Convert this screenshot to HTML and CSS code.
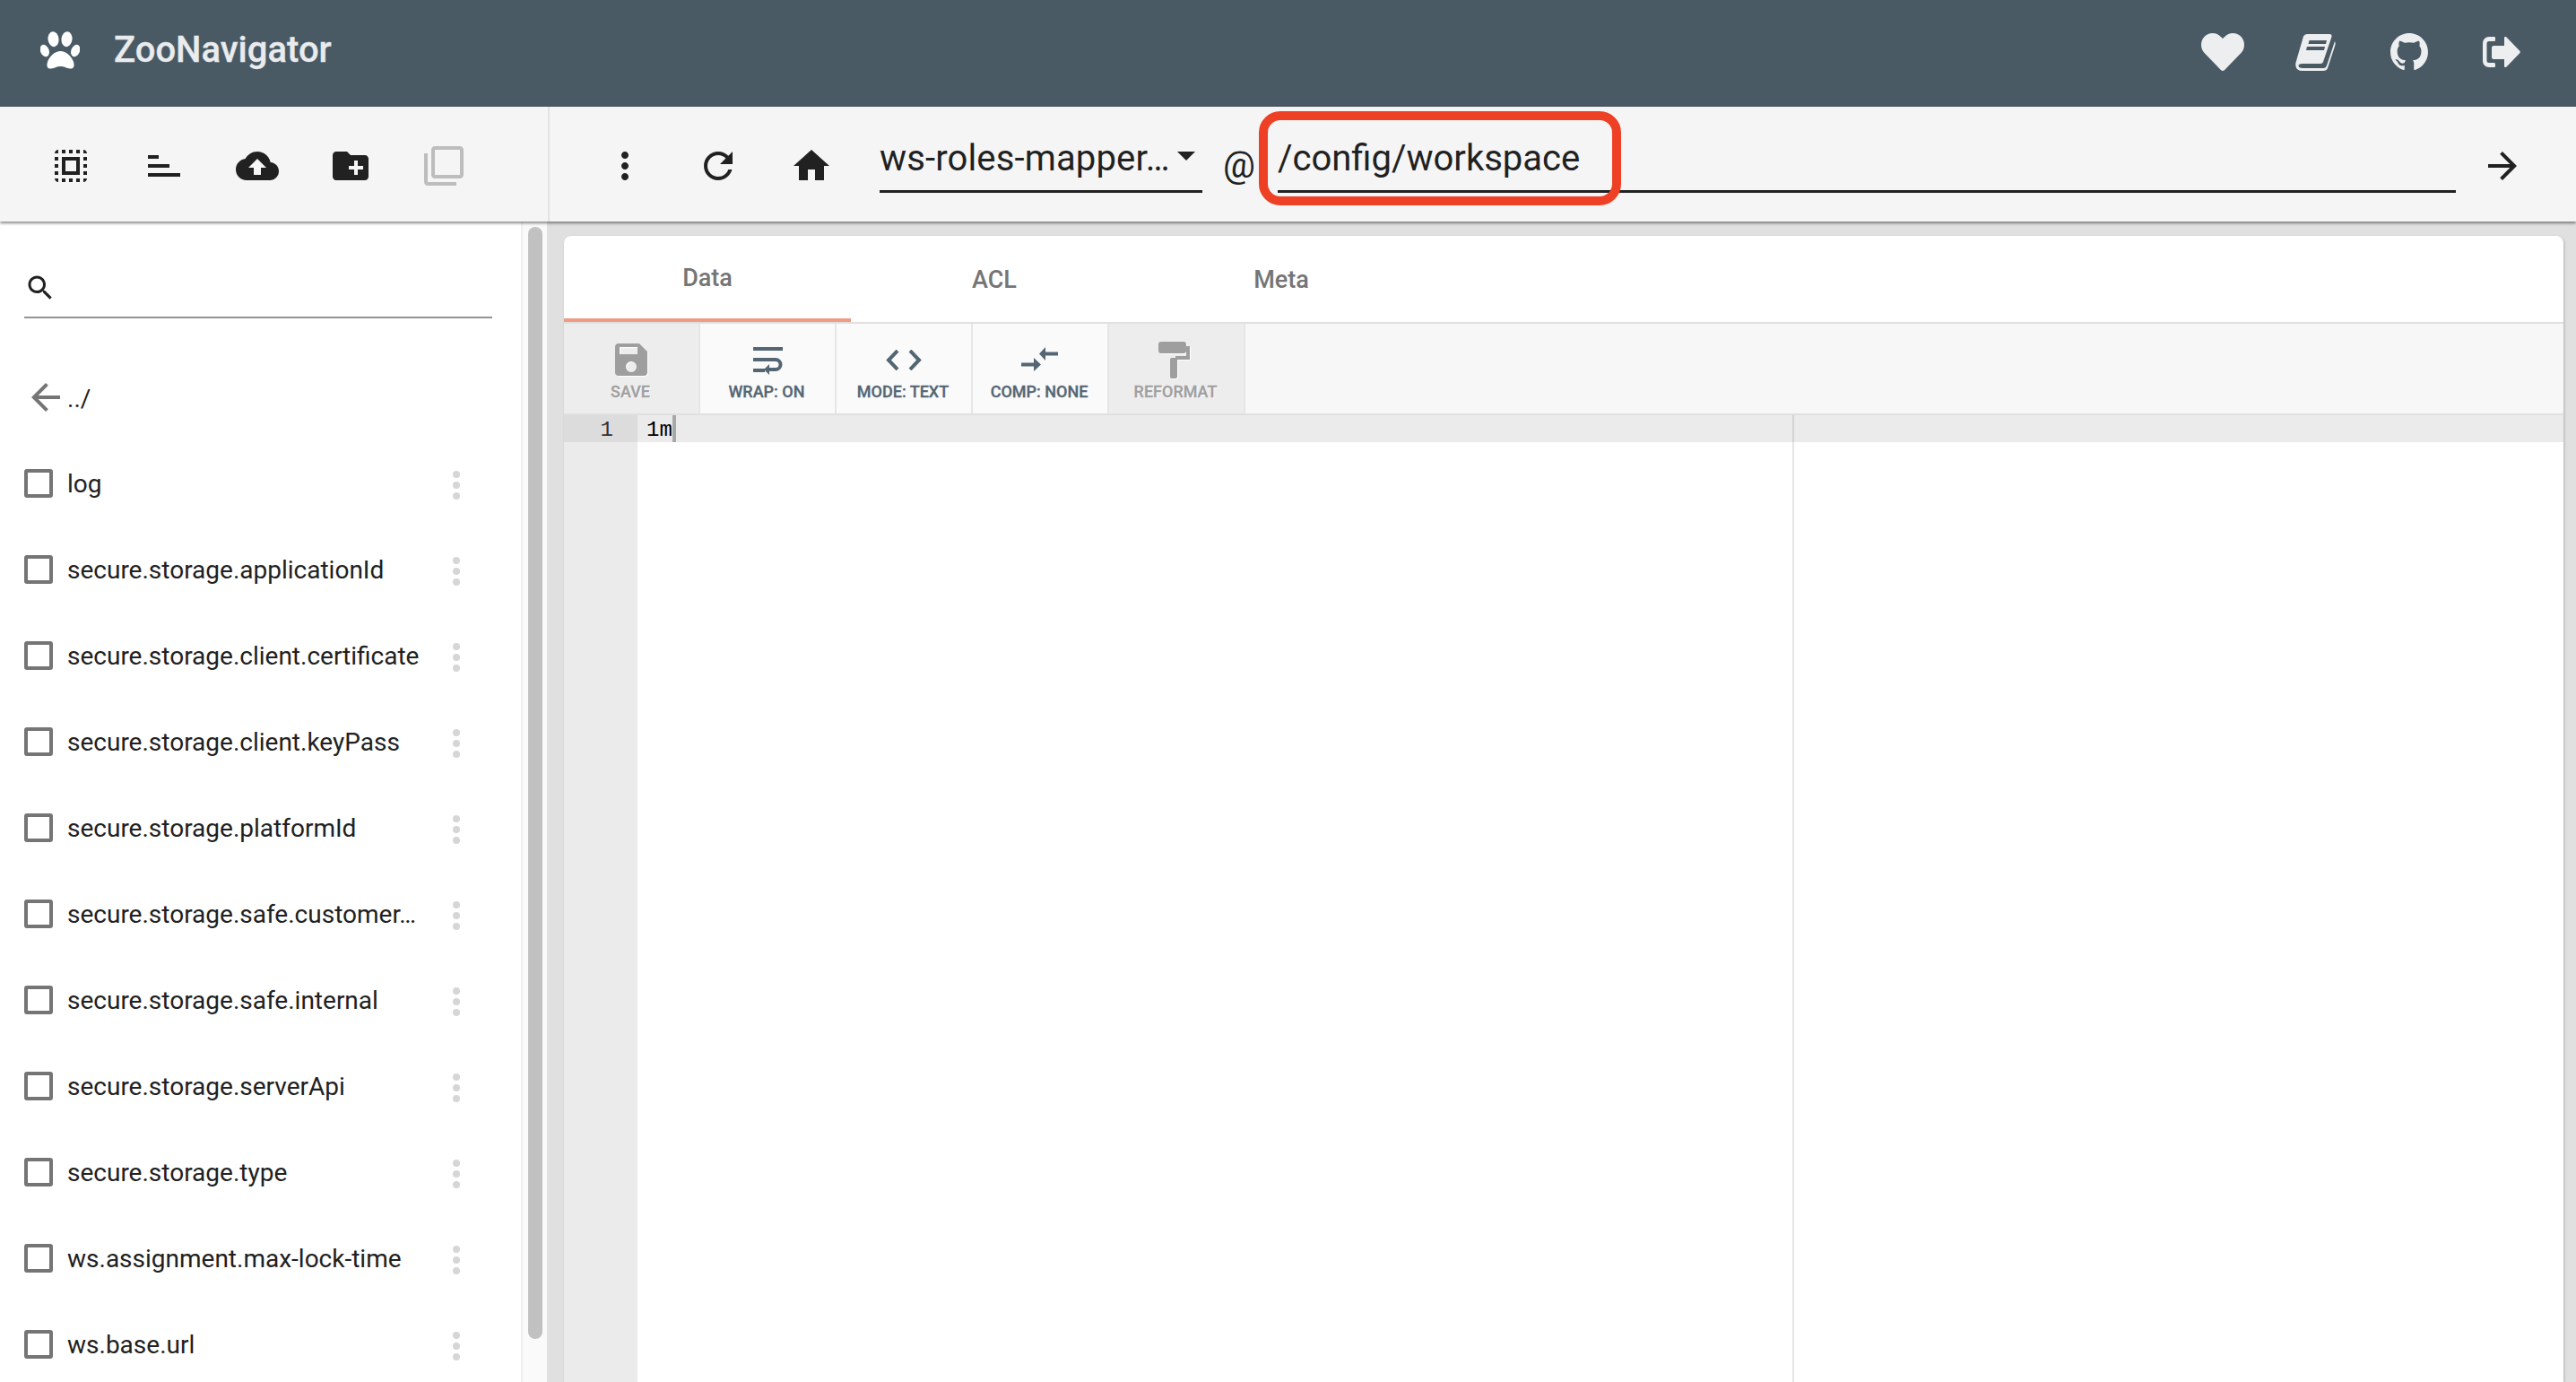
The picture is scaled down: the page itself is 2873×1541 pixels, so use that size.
FILE: index.html
```html
<!DOCTYPE html>
<html lang="en">
<head>
<meta charset="utf-8">
<title>ZooNavigator</title>
<link rel="stylesheet" href="styles.css">
</head>
<body>
<header class="appbar">
  <svg class="paw" viewBox="0 0 44 42"><path d="M22.500 22c6 0 12 5 14.500 12 1.500 5 0 8-4 7.500-4-.5-6.500-2.500-10.500-2.500s-6.500 2-10.500 2.500c-4 .5-5.500-2.500-4-7.500C10.500 27 16.500 22 22.500 22z"/><ellipse cx="14.500" cy="8.700" rx="6" ry="8.500" transform="rotate(-6 14.500 8.700)"/><ellipse cx="29.500" cy="8.700" rx="6" ry="8.500" transform="rotate(6 29.500 8.700)"/><ellipse cx="4.800" cy="21.500" rx="4.800" ry="7" transform="rotate(-22 4.800 21.500)"/><ellipse cx="39.200" cy="21.500" rx="4.800" ry="7" transform="rotate(22 39.200 21.500)"/></svg>
  <span class="brand">ZooNavigator</span>
  <nav class="appbar-actions">
    <svg class="ic-heart" viewBox="0 32 512 448"><path d="M462.3 62.6C407.5 15.9 326 24.3 275.7 76.2L256 96.5l-19.7-20.3C186.1 24.3 104.5 15.9 49.7 62.6c-62.8 53.6-66.1 149.8-9.9 207.9l193.5 199.8c12.5 12.9 32.8 12.9 45.3 0l193.5-199.8c56.3-58.1 53-154.3-9.8-207.9z"/></svg>
    <svg class="ic-book" viewBox="0 0 45 41"><path fill-rule="evenodd" d="M9 2.500Q10 0 13 0H38Q41 0 40.500 3L31 31Q30.500 33 28 33H8Q3 33 3.500 35.500Q4 38 8 38H32Q34 38 35 35L44 8Q45 10 44.500 12L36 38Q35 41 31 41H8Q1 41 .3 35Q0 33 1 30ZM15.500 7H35L34 11H14.500ZM13 14H33L32 18H12Z"/></svg>
    <svg class="ic-gh" viewBox="0 0 16 16"><path d="M8 0C3.580 0 0 3.580 0 8c0 3.540 2.290 6.530 5.470 7.590.4.070.55-.17.55-.38 0-.19-.01-.82-.01-1.490-2.010.37-2.530-.49-2.690-.94-.09-.23-.48-.94-.82-1.130-.28-.15-.68-.52-.01-.53.63-.01 1.080.58 1.230.82.72 1.210 1.870.87 2.330.66.07-.52.28-.87.51-1.070-1.780-.2-3.640-.89-3.640-3.950 0-.87.31-1.590.82-2.150-.08-.2-.36-1.020.08-2.120 0 0 .67-.21 2.200.82.64-.18 1.320-.27 2-.27.68 0 1.360.09 2 .27 1.530-1.040 2.200-.82 2.200-.82.44 1.100.16 1.920.08 2.120.51.56.82 1.270.82 2.150 0 3.070-1.870 3.750-3.650 3.950.29.25.54.73.54 1.480 0 1.070-.01 1.930-.01 2.200 0 .21.15.46.55.38A8.013 8.013 0 0016 8c0-4.420-3.580-8-8-8z"/></svg>
    <svg class="ic-out" viewBox="0 0 42 34"><path d="M13 0H7a7 7 0 0 0-7 7v20a7 7 0 0 0 7 7h6c1 0 1-1 1-2v-1c0-1-.5-2-1-2H7a2.500 2.500 0 0 1-2.500-2.500V7.500A2.500 2.500 0 0 1 7 5h6c1 0 1-1 1-2V2c0-1 0-2-1-2z"/><path d="M24 1c0-1 1.500-1.500 2.500-.5L41 15.500c1 1 1 2 0 3L26.500 33.500c-1 1-2.500.5-2.500-.5V25H12c-1 0-2-1-2-2V12c0-1 1-2 2-2h12z"/></svg>
  </nav>
</header>

<section class="toolbar">
  <div class="tools-left">
    <button class="ic-btn"><svg viewBox="0 0 24 24"><path d="M3 5h2V3c-1.100 0-2 .9-2 2zm0 8h2v-2H3v2zm4 8h2v-2H7v2zM3 9h2V7H3v2zm10-6h-2v2h2V3zm6 0v2h2c0-1.100-.9-2-2-2zM5 21v-2H3c0 1.100.9 2 2 2zm-2-4h2v-2H3v2zM9 3H7v2h2V3zm2 18h2v-2h-2v2zm8-8h2v-2h-2v2zm0 8c1.100 0 2-.9 2-2h-2v2zm0-12h2V7h-2v2zm0 8h2v-2h-2v2zm-4 4h2v-2h-2v2zm0-16h2V3h-2v2zM7 17h10V7H7v10zm2-8h6v6H9V9z"/></svg></button>
    <button class="ic-btn"><svg viewBox="0 0 24 24"><path d="M3 6h6v2H3zM3 11h12v2H3zM3 16h18v2H3z"/></svg></button>
    <button class="ic-btn"><svg viewBox="0 0 24 24"><path d="M19.350 10.040C18.670 6.590 15.640 4 12 4 9.110 4 6.600 5.640 5.350 8.040 2.340 8.360 0 10.910 0 14c0 3.310 2.690 6 6 6h13c2.760 0 5-2.240 5-5 0-2.640-2.050-4.780-4.650-4.960zM14 13v4h-4v-4H7l5-5 5 5h-3z"/></svg></button>
    <button class="ic-btn"><svg viewBox="0 0 24 24"><path d="M20 6h-8l-2-2H4c-1.110 0-1.990.89-1.990 2L2 18c0 1.110.89 2 2 2h16c1.110 0 2-.89 2-2V8c0-1.110-.89-2-2-2zm-1 8h-3v3h-2v-3h-3v-2h3V9h2v3h3v2z"/></svg></button>
    <button class="ic-btn is-disabled"><svg viewBox="0 0 24 24"><path d="M3 5H1v16c0 1.100.9 2 2 2h16v-2H3V5zm18-4H7c-1.100 0-2 .9-2 2v14c0 1.100.9 2 2 2h14c1.100 0 2-.9 2-2V3c0-1.100-.9-2-2-2zm0 16H7V3h14v14z"/></svg></button>
  </div>
  <div class="tools-right">
    <button class="ic-btn"><svg viewBox="0 0 24 24"><path d="M12 8c1.100 0 2-.9 2-2s-.9-2-2-2-2 .9-2 2 .9 2 2 2zm0 2c-1.100 0-2 .9-2 2s.9 2 2 2 2-.9 2-2-.9-2-2-2zm0 6c-1.100 0-2 .9-2 2s.9 2 2 2 2-.9 2-2-.9-2-2-2z"/></svg></button>
    <button class="ic-btn"><svg viewBox="0 0 24 24"><path d="M17.650 6.350C16.200 4.900 14.210 4 12 4c-4.420 0-7.990 3.580-7.990 8s3.570 8 7.990 8c3.730 0 6.840-2.550 7.730-6h-2.080c-.82 2.330-3.040 4-5.650 4-3.310 0-6-2.690-6-6s2.690-6 6-6c1.660 0 3.140.69 4.220 1.780L13 11h7V4l-2.350 2.350z"/></svg></button>
    <button class="ic-btn"><svg viewBox="0 0 24 24"><path d="M10 20v-6h4v6h5v-8h3L12 3 2 12h3v8z"/></svg></button>
    <div class="server-select">
      <span class="server-name">ws-roles-mapper…</span>
      <span class="caret"></span>
    </div>
    <span class="at">@</span>
    <div class="path-field">/config/workspace<span class="callout"></span></div>
    <button class="ic-btn go-btn"><svg viewBox="0 0 24 24"><path d="M12 4l-1.410 1.410L16.170 11H4v2h12.170l-5.580 5.590L12 20l8-8z"/></svg></button>
  </div>
</section>

<main class="workspace">
  <aside class="sidebar">
    <div class="side-main">
      <div class="search">
        <svg viewBox="0 0 24 24"><path d="M15.500 14h-.79l-.28-.27C15.410 12.590 16 11.110 16 9.500 16 5.910 13.090 3 9.500 3S3 5.910 3 9.500 5.910 16 9.500 16c1.610 0 3.090-.59 4.230-1.570l.27.28v.79l5 4.990L20.490 19l-4.990-5zm-6 0C7.010 14 5 11.990 5 9.500S7.010 5 9.500 5 14 7.010 14 9.500 11.990 14 9.500 14z"/></svg>
      </div>
      <div class="back">
        <svg viewBox="0 0 24 24"><path d="M20 11H7.830l5.590-5.590L12 4l-8 8 8 8 1.410-1.410L7.830 13H20v-2z"/></svg>
        <span>../</span>
      </div>
      <ul class="znodes">
        <li class="znode"><span class="check"></span><span class="znode-name">log</span><span class="dots"><i></i><i></i><i></i></span></li>
        <li class="znode"><span class="check"></span><span class="znode-name">secure.storage.applicationId</span><span class="dots"><i></i><i></i><i></i></span></li>
        <li class="znode"><span class="check"></span><span class="znode-name">secure.storage.client.certificate</span><span class="dots"><i></i><i></i><i></i></span></li>
        <li class="znode"><span class="check"></span><span class="znode-name">secure.storage.client.keyPass</span><span class="dots"><i></i><i></i><i></i></span></li>
        <li class="znode"><span class="check"></span><span class="znode-name">secure.storage.platformId</span><span class="dots"><i></i><i></i><i></i></span></li>
        <li class="znode"><span class="check"></span><span class="znode-name">secure.storage.safe.customer…</span><span class="dots"><i></i><i></i><i></i></span></li>
        <li class="znode"><span class="check"></span><span class="znode-name">secure.storage.safe.internal</span><span class="dots"><i></i><i></i><i></i></span></li>
        <li class="znode"><span class="check"></span><span class="znode-name">secure.storage.serverApi</span><span class="dots"><i></i><i></i><i></i></span></li>
        <li class="znode"><span class="check"></span><span class="znode-name">secure.storage.type</span><span class="dots"><i></i><i></i><i></i></span></li>
        <li class="znode"><span class="check"></span><span class="znode-name">ws.assignment.max-lock-time</span><span class="dots"><i></i><i></i><i></i></span></li>
        <li class="znode"><span class="check"></span><span class="znode-name">ws.base.url</span><span class="dots"><i></i><i></i><i></i></span></li>
      </ul>
    </div>
    <div class="scrolltrack"><div class="scrollthumb"></div></div>
  </aside>

  <section class="card">
    <div class="tabs">
      <div class="tab is-active">Data</div>
      <div class="tab">ACL</div>
      <div class="tab">Meta</div>
    </div>
    <div class="editor-tools">
      <button class="ed-btn is-off">
        <svg class="ed-save" viewBox="0 0 36 36"><path fill-rule="evenodd" d="M4 0h23l9 9v23a4 4 0 0 1-4 4H4a4 4 0 0 1-4-4V4a4 4 0 0 1 4-4zM5 4v8h20V4zM18 20a6 6 0 1 0 0 12 6 6 0 0 0 0-12z"/></svg>
        <span>SAVE</span>
      </button>
      <button class="ed-btn">
        <svg class="ed-wrap" viewBox="0 0 34 32"><path d="M0 0h33v4H0zM0 12h25a7.500 7.500 0 0 1 0 15h-7v4l-6-6 6-6v4h7a3.500 3.500 0 0 0 0-7H0zM0 24h13v4H0z"/></svg>
        <span>WRAP: ON</span>
      </button>
      <button class="ed-btn">
        <svg class="ed-code" viewBox="0 0 40 23"><path d="M13 1L3 11.500 13 22M27 1l10 10.500L27 22"/></svg>
        <span>MODE: TEXT</span>
      </button>
      <button class="ed-btn">
        <svg class="ed-comp" viewBox="0 0 41 27"><path d="M20 7.500L27 0v5.500h14v4H27V15zM22 19.500L14 27v-5.500H0v-4h14V12z"/></svg>
        <span>COMP: NONE</span>
      </button>
      <button class="ed-btn is-off">
        <svg class="ed-roll" viewBox="0 0 35 41"><rect width="31" height="13" rx="3"/><path d="M31 5h4v15H19v-4h12z"/><rect x="13" y="18" width="8" height="23" rx="2"/></svg>
        <span>REFORMAT</span>
      </button>
    </div>
    <div class="editor">
      <div class="gutter"><div class="gutter-cell">1</div></div>
      <div class="code">
        <div class="code-line">1m<span class="cursor"></span></div>
        <div class="print-margin"></div>
      </div>
    </div>
  </section>
</main>
</body>
</html>
```

FILE: styles.css
```css
* { box-sizing: border-box; }
html, body { margin: 0; height: 100%; overflow: hidden; }
body {
  width: 2873px;
  height: 1541px;
  display: flex;
  flex-direction: column;
  background: #e0e0e0;
  font-family: Roboto, "Liberation Sans", sans-serif;
  color: #212121;
}
ul { list-style: none; margin: 0; padding: 0; }
button { border: 0; background: none; padding: 0; margin: 0; font: inherit; }

.appbar {
  flex: none;
  height: 119px;
  background: #4a5a65;
  display: flex;
  align-items: center;
  padding-left: 45px;
  color: #eceef0;
}
.paw { width: 44px; height: 42px; fill: #fff; margin-bottom: 8px; }
.brand { margin-left: 38px; margin-bottom: 9px; font-size: 40px; font-weight: 500; color: #e9ebed; -webkit-text-stroke: .3px #e9ebed; }
.appbar-actions { margin-left: auto; margin-bottom: 3px; display: flex; align-items: center; padding-right: 62px; }
.appbar-actions svg { fill: #eceef0; display: block; }
.ic-heart { width: 48px; height: 42px; margin-right: 57px; }
.ic-book { width: 45px; height: 41px; margin-right: 61px; }
.ic-gh { width: 42px; height: 42px; margin-right: 61px; }
.ic-out { width: 42px; height: 34px; }

.toolbar {
  flex: none;
  height: 128px;
  background: #f5f5f5;
  display: flex;
  box-shadow: 0 2px 3px rgba(0,0,0,.45);
  position: relative;
  z-index: 2;
}
.tools-left {
  width: 613px;
  flex: none;
  display: flex;
  align-items: center;
  padding-left: 27px;
  border-right: 2px solid #e3e3e3;
}
.tools-right { flex: 1; display: flex; align-items: center; padding-left: 32px; position: relative; }
.ic-btn { width: 104px; height: 48px; margin-top: 4px; display: flex; justify-content: center; flex: none; }
.ic-btn svg { width: 48px; height: 48px; fill: #212121; display: block; }
.is-disabled svg { fill: #bdbdbd; }

.server-select {
  flex: none;
  align-self: flex-start;
  margin: 23px 0 0 24px;
  width: 360px;
  height: 73px;
  border-bottom: 3px solid #212121;
  position: relative;
  font-size: 40px;
  padding-top: 11px;
  line-height: 47px;
}
.server-name { white-space: nowrap; letter-spacing: .15px; }
.caret {
  position: absolute;
  right: 8px;
  top: 27px;
  width: 0;
  height: 0;
  border-left: 10px solid transparent;
  border-right: 10px solid transparent;
  border-top: 10px solid #212121;
}
.at { flex: none; align-self: flex-start; margin: 42px 0 0 23px; width: 61px; font-size: 40px; line-height: 47px; }
.path-field {
  flex: none;
  align-self: flex-start;
  margin-top: 23px;
  width: 1314px;
  height: 73px;
  border-bottom: 3px solid #212121;
  font-size: 40px;
  padding-top: 11px;
  line-height: 47px;
  position: relative;
}
.callout {
  position: absolute;
  left: -21px;
  top: -18px;
  width: 404px;
  height: 105px;
  border: 10px solid #ee4024;
  border-radius: 24px;
}

.workspace { flex: 1; min-height: 0; display: flex; }
.sidebar { flex: none; width: 610px; display: flex; background: #fff; }
.side-main { width: 583px; flex: none; border-right: 2px solid #efefef; overflow: hidden; }
.scrolltrack { flex: 1; background: #fafafa; padding: 6px 5px 0 6px; }
.scrollthumb { height: 1240px; background: #c1c1c1; border-radius: 8px; }

.search {
  margin: 56px 0 0 27px;
  width: 522px;
  height: 52px;
  border-bottom: 2px solid #949494;
}
.search svg { width: 36px; height: 36px; fill: #212121; display: block; }
.back { display: flex; align-items: center; margin: 64px 0 0 27px; height: 48px; font-size: 28px; }
.back svg { width: 48px; height: 48px; fill: #757575; flex: none; }
.back span { position: relative; top: 1px; }

.znodes { margin-top: 24px; }
.znode { height: 96px; display: flex; align-items: center; padding-left: 27px; font-size: 28px; position: relative; }
.check { width: 32px; height: 32px; border: 4px solid #757575; border-radius: 3px; flex: none; margin-right: 17px; }
.znode-name { white-space: nowrap; margin-left: -1px; }
.dots {
  position: absolute;
  left: 505px;
  top: 34px;
  display: flex;
  flex-direction: column;
  gap: 4px;
}
.dots i { width: 8px; height: 8px; border-radius: 50%; background: #d6d6d6; display: block; }

.card {
  flex: none;
  width: 2230px;
  margin: 16px 0 0 19px;
  background: #fff;
  border-radius: 8px 8px 0 0;
  box-shadow: 1px 1px 3px rgba(0,0,0,.2);
  display: flex;
  flex-direction: column;
  overflow: hidden;
}
.tabs { flex: none; height: 98px; display: flex; border-bottom: 2px solid #e0e0e0; }
.tab {
  width: 320px;
  height: 96px;
  padding-top: 2px;
  display: flex;
  align-items: center;
  justify-content: center;
  font-size: 27px;
  font-weight: 500;
  color: #757575;
}
.tab.is-active { border-bottom: 4px solid #f09c85; }
.editor-tools { flex: none; height: 102px; display: flex; background: #f7f7f7; border-bottom: 2px solid #e0e0e0; }
.ed-btn {
  width: 152px;
  height: 100px;
  background: #fafafa;
  border-right: 2px solid #e6e6e6;
  display: flex;
  flex-direction: column;
  align-items: center;
  color: #546673;
  font-size: 18px;
  font-weight: 500;
  -webkit-text-stroke: .3px currentColor;
  position: relative;
}
.ed-btn.is-off { background: #ededed; color: #a0a0a0; text-shadow: 1px 1px 0 #fff; }
.ed-btn span { position: absolute; top: 65px; left: 0; right: 2px; text-align: center; white-space: nowrap; }
.ed-btn svg { position: absolute; fill: #546673; display: block; }
.ed-btn.is-off svg { fill: #9e9e9e; filter: drop-shadow(1px 1px 0 #fff); }
.ed-save { width: 36px; height: 36px; top: 22px; left: 57px; }
.ed-wrap { width: 34px; height: 32px; top: 26px; left: 59px; }
.ed-code { width: 40px; height: 23px; top: 29px; left: 55px; fill: none !important; stroke: #546673; stroke-width: 4; }
.ed-comp { width: 41px; height: 27px; top: 26px; left: 54px; }
.ed-roll { width: 35px; height: 41px; top: 20px; left: 55px; }

.editor { flex: 1; min-height: 0; display: flex; }
.gutter { width: 82px; flex: none; background: #ebebeb; }
.gutter-cell {
  height: 30px;
  padding-top: 2px;
  background: #dcdcdc;
  font: 24px/30px "Liberation Mono", monospace;
  color: #333;
  text-align: right;
  padding-right: 27px;
}
.code { flex: 1; position: relative; background: #fff; }
.code-line {
  height: 30px;
  padding-top: 2px;
  background: #ebebeb;
  font: 24px/30px "Liberation Mono", monospace;
  color: #000;
  padding-left: 10px;
  display: flex;
  align-items: flex-start;
}
.cursor { width: 4px; height: 30px; margin-top: -2px; background: #a8a8a8; display: block; }
.print-margin { position: absolute; left: 1288px; top: 0; bottom: 0; width: 2px; background: rgba(0,0,0,.1); }
```
